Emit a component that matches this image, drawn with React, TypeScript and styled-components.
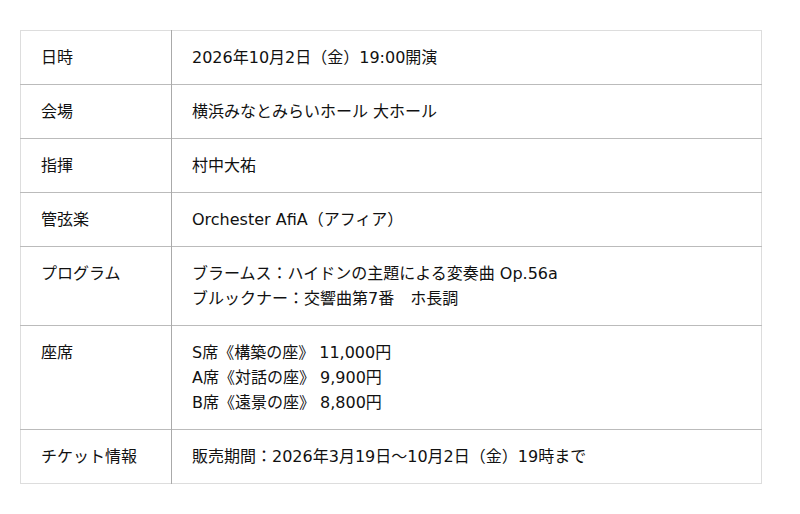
import React from 'react';
import styled, { createGlobalStyle } from 'styled-components';

const GlobalStyle = createGlobalStyle`
  body {
    margin: 0;
    background: #ffffff;
    font-family: "DejaVu Sans", "Noto Sans CJK JP", sans-serif;
    color: #111111;
  }
`;

const Page = styled.div`
  padding: 30px 20px;
`;

const InfoTable = styled.table`
  width: 742px;
  border-collapse: collapse;
  border: 1px solid #dddddd;
  font-size: 16px;
  line-height: 25px;
`;

const Row = styled.tr`
  border-bottom: 1px solid #bbbbbb;

  &:last-child {
    border-bottom: 1px solid #dddddd;
  }
`;

const Label = styled.th`
  width: 110px;
  padding: 14px 20px;
  text-align: left;
  vertical-align: top;
  font-weight: normal;
  border-right: 1px solid #aaaaaa;
  white-space: nowrap;
`;

const Value = styled.td`
  padding: 14px 20px;
  vertical-align: top;
`;

const Line = styled.div``;

interface Item {
  label: string;
  lines: string[];
}

const items: Item[] = [
  { label: '日時', lines: ['2026年10月2日（金）19:00開演'] },
  { label: '会場', lines: ['横浜みなとみらいホール 大ホール'] },
  { label: '指揮', lines: ['村中大祐'] },
  { label: '管弦楽', lines: ['Orchester AfiA（アフィア）'] },
  {
    label: 'プログラム',
    lines: ['ブラームス：ハイドンの主題による変奏曲 Op.56a', 'ブルックナー：交響曲第7番　ホ長調'],
  },
  {
    label: '座席',
    lines: ['S席《構築の座》 11,000円', 'A席《対話の座》 9,900円', 'B席《遠景の座》 8,800円'],
  },
  { label: 'チケット情報', lines: ['販売期間：2026年3月19日〜10月2日（金）19時まで'] },
];

const App: React.FC = () => {
  return (
    <Page>
      <GlobalStyle />
      <InfoTable>
        <tbody>
          {items.map(item => (
            <Row key={item.label}>
              <Label>{item.label}</Label>
              <Value>
                {item.lines.map(line => (
                  <Line key={line}>{line}</Line>
                ))}
              </Value>
            </Row>
          ))}
        </tbody>
      </InfoTable>
    </Page>
  );
};

export default App;
